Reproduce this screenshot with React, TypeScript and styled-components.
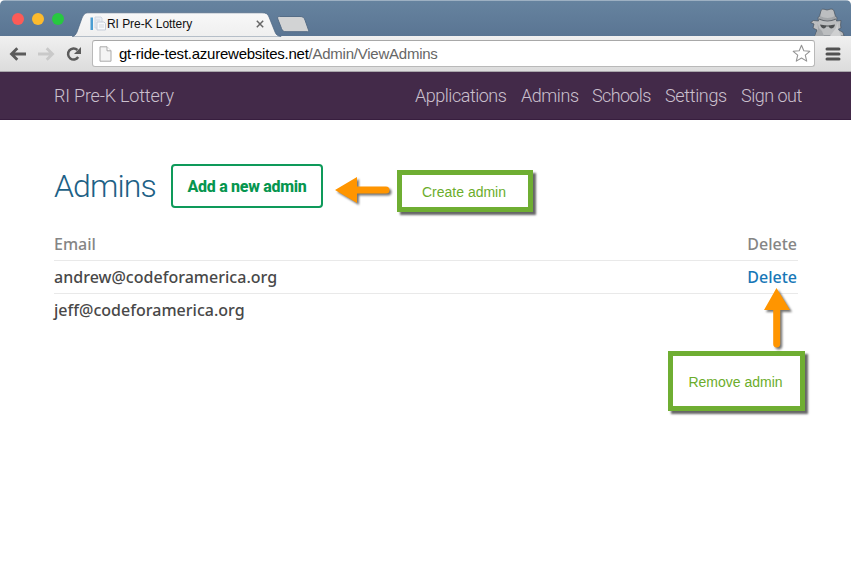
import React from "react";
import styled, { createGlobalStyle } from "styled-components";

const GlobalStyle = createGlobalStyle`
  * { box-sizing: border-box; }
  body { margin: 0; background: #fff; }
  a { text-decoration: none; color: inherit; }
`;

const Window = styled.div`
  width: 851px;
  height: 564px;
  position: relative;
  display: flex;
  flex-direction: column;
  background: #fff;
  border-radius: 5px 5px 4px 4px;
  overflow: hidden;
`;

const TabStrip = styled.div`
  height: 36px;
  flex: none;
  display: flex;
  align-items: flex-start;
  background: linear-gradient(#66839f, #5a7593);
  border-top: 1px solid #9db0c2;
`;

const Lights = styled.div`
  display: flex;
  gap: 8px;
  padding: 12px 0 0 12px;
  width: 72px;
  flex: none;
`;

const Light = styled.span<{ $fill: string }>`
  width: 12px;
  height: 12px;
  flex: none;
  border-radius: 50%;
  background: ${(p) => p.$fill};
`;

const Tab = styled.div`
  width: 211px;
  height: 36px;
  flex: none;
  position: relative;
`;

const TabShape = styled.svg`
  position: absolute;
  left: 0;
  top: 0;
`;

const TabContent = styled.div`
  position: relative;
  display: flex;
  align-items: center;
  height: 22px;
  margin-top: 12px;
  padding-left: 18px;
`;

const TabTitle = styled.span`
  width: 149px;
  margin-left: 1px;
  white-space: nowrap;
  font: 12px/16px "Liberation Sans", sans-serif;
  letter-spacing: -0.06px;
  color: #111;
`;

const NewTab = styled.svg`
  margin: 14px 0 0 -7px;
  position: relative;
`;

const Incognito = styled.svg`
  margin: 7px 6px 0 auto;
`;

const Toolbar = styled.div`
  height: 36px;
  flex: none;
  display: flex;
  align-items: center;
  padding: 0 10px 0 9px;
  background: linear-gradient(#f0f0f0, #dcdcdc);
  border-bottom: 1px solid #a9a6ab;
`;

const NavIcons = styled.div`
  display: flex;
  width: 83px;
  flex: none;
`;

const AddressBar = styled.div`
  width: 723px;
  height: 27px;
  flex: none;
  display: flex;
  align-items: center;
  padding: 0 3px 0 6px;
  border: 1px solid #b9b9b9;
  border-top-color: #a8a8a8;
  border-radius: 3px;
  background: #fff;
`;

const Url = styled.span`
  margin-left: 7px;
  flex: 1;
  white-space: nowrap;
  font: 15px/20px "Liberation Sans", sans-serif;
  letter-spacing: -0.24px;
  color: #666;
`;

const Host = styled.span`
  color: #000;
`;

const MenuIcon = styled.svg`
  margin-left: 10px;
`;

const SiteHeader = styled.header`
  height: 48px;
  flex: none;
  display: flex;
  align-items: center;
  justify-content: space-between;
  padding: 0 49px 0 54px;
  background: #432a49;
  border-bottom: 1px solid #371d3e;
  color: #cbc0ce;
  font: 300 18px/24px Roboto, sans-serif;
`;

const SiteNav = styled.nav`
  display: flex;
  gap: 14px;
`;

const NavLink = styled.a<{ $width: number; $spacing?: number }>`
  width: ${(p) => p.$width}px;
  padding-top: 1px;
  white-space: nowrap;
  letter-spacing: ${(p) => p.$spacing ?? 0}px;
`;

const Main = styled.main`
  padding: 44px 53px 0 54px;
`;

const TitleRow = styled.div`
  display: flex;
  align-items: center;
  height: 44px;
`;

const Title = styled.h1`
  margin: 0;
  width: 117px;
  font: 300 32px/44px Roboto, sans-serif;
  letter-spacing: -0.9px;
  color: #1d6186;
`;

const AddButton = styled.button`
  width: 152px;
  height: 44px;
  padding: 2px 0 0;
  border: 2px solid #0e9a5a;
  border-radius: 4px;
  background: #fff;
  color: #06964f;
  white-space: nowrap;
  font: 800 16px/24px Roboto, sans-serif;
  letter-spacing: -0.3px;
`;

const Table = styled.div`
  margin-top: 20px;
  font: 16px/32px "Noto Sans", sans-serif;
  color: #484848;
`;

const Row = styled.div<{ $head?: boolean; $last?: boolean }>`
  height: 33px;
  display: flex;
  justify-content: space-between;
  border-bottom: ${(p) => (p.$last ? "0" : "1px solid #e9e9e9")};
  color: ${(p) => (p.$head ? "#858585" : "inherit")};
`;

const Cell = styled.span<{ $spacing?: number; $action?: boolean }>`
  padding-right: ${(p) => (p.$action ? 1 : 0)}px;
  font-weight: 500;
  letter-spacing: ${(p) => p.$spacing ?? 0}px;
`;

const DeleteLink = styled.a`
  color: #1777b7;
`;

const Callout = styled.div<{ $x: number; $y: number; $w: number; $h: number }>`
  position: absolute;
  left: ${(p) => p.$x}px;
  top: ${(p) => p.$y}px;
  width: ${(p) => p.$w}px;
  height: ${(p) => p.$h}px;
  display: flex;
  align-items: center;
  justify-content: center;
  padding: 2px 2px 0 0;
  border: 5px solid #6fae32;
  background: #fff;
  box-shadow: 3px 3px 2px rgba(0, 0, 0, 0.6);
  color: #6bad2b;
  white-space: nowrap;
  font: 14px/18px "Liberation Sans", sans-serif;
`;

const Arrow = styled.svg<{ $x: number; $y: number }>`
  position: absolute;
  left: ${(p) => p.$x}px;
  top: ${(p) => p.$y}px;
  overflow: visible;
  filter: drop-shadow(2px 2px 1px rgba(0, 0, 0, 0.55));
`;

function PageIcon() {
  return (
    <svg width="13" height="16" viewBox="0 0 13 16">
      <path d="M1 .8h7l4 4v10.4H1z" fill="#f4f4f4" stroke="#aaa" />
      <path d="M8 .8v4h4" fill="#fff" stroke="#aaa" />
    </svg>
  );
}

function BrowserChrome() {
  return (
    <>
      <TabStrip>
        <Lights>
          <Light $fill="#fc5b57" />
          <Light $fill="#fdbb2d" />
          <Light $fill="#27c840" />
        </Lights>
        <Tab>
          <TabShape width="211" height="36">
            <defs>
              <linearGradient id="tab" x2="0" y2="1">
                <stop offset="0" stopColor="#f8f8f8" />
                <stop offset="1" stopColor="#efefef" />
              </linearGradient>
            </defs>
            <path
              d="M0 36C3 35 4 33 5 31L10 17C12 13 13 11.8 17 11.8H190C194 11.8 196 13 197 16L203 31C204 34 206 35 209 35.5V36Z"
              fill="url(#tab)"
              stroke="#4c6683"
              strokeWidth=".7"
            />
          </TabShape>
          <TabContent>
            <svg width="16" height="16" viewBox="0 0 16 16">
              <path d="M.5 1.5h2.5v12.5h-2.5z" fill="#4b9ed3" />
              <path d="M5 1h6l1 1v10H5z" fill="#e9edf3" stroke="#d1d8e2" />
              <path d="M7 6h7l1.5 1.5V14H7z" fill="#f8fafc" stroke="#c6cdd9" />
              <path d="M6 4h4M9 9h5M9 11h5" stroke="#d3d9e2" />
            </svg>
            <TabTitle>RI Pre-K Lottery</TabTitle>
            <svg width="8" height="8" viewBox="0 0 8 8">
              <path d="M.8.8l6.4 6.4M7.2.8L.8 7.2" stroke="#666" strokeWidth="1.5" />
            </svg>
          </TabContent>
        </Tab>
        <NewTab width="34" height="18" viewBox="0 0 34 18">
          <path
            d="M3.5 1.5H24C27 1.5 28 2.5 29 5L32.5 15C33 16.2 32.5 16.7 31.5 16.7H10C7.5 16.7 6.5 16 5.5 13.5L1.8 4C1.2 2.2 1.7 1.5 3.5 1.5Z"
            fill="#d2d3d4"
            stroke="#556d87"
          />
        </NewTab>
        <Incognito width="35" height="28" viewBox="0 0 35 28">
          <path
            d="M5 28L7 22L3 20L4 16L0.7 14.5L3.5 12.5L8.5 13L8 9.5L9.5 8.5L11 2.5Q12 .8 14 1.2L17 2L21 1Q23.5 .8 24 3L25.5 8.5L27 9.5L26.5 13L31 12.5L30.5 17L31 20L28 21.5L33 24.5L34 28Z"
            fill="#bcbec0"
            stroke="#4b535c"
            strokeWidth=".7"
          />
          <path d="M10 8Q17.500 12 25 8L26 10.500Q17.500 15 9 10.500Z" fill="#a3a6a9" />
          <path d="M9 11Q17.500 15 26 11" fill="none" stroke="#656a70" strokeWidth="1.200" />
          <path d="M10 16.500L16.300 17.500Q16 20.500 13.500 20.500Q11 20 10 16.500ZM18.700 17.500L25 16.500Q24.500 20 21.500 20.500Q19 20.500 18.700 17.500Z" fill="#4d5052" />
          <path d="M15.500 18h4" stroke="#4d5052" />
          <path d="M7.500 15L9 20L12 23L14 28H5L8 21Z" fill="#a4a7aa" />
          <path d="M27.500 15L26 20L20 28H31L28 21Z" fill="#cfd0d1" />
        </Incognito>
      </TabStrip>
      <Toolbar>
        <NavIcons>
          <svg width="77" height="18" viewBox="0 0 77 18">
            <path d="M17 9H3M8.3 3.2L2.5 9l5.8 5.8" fill="none" stroke="#5b5b5b" strokeWidth="2.8" />
            <path d="M29 9h14M37.7 3.2L43.5 9l-5.8 5.8" fill="none" stroke="#c9c9c9" strokeWidth="2.8" />
            <path d="M69.2 12A5.5 5.5 0 1 1 68.4 5" fill="none" stroke="#5b5b5b" strokeWidth="2.5" />
            <path d="M72 2v7h-7z" fill="#5b5b5b" />
          </svg>
        </NavIcons>
        <AddressBar>
          <PageIcon />
          <Url>
            <Host>gt-ride-test.azurewebsites.net</Host>/Admin/ViewAdmins
          </Url>
          <svg width="19" height="19" viewBox="0 0 19 19">
            <path
              d="M9.5 1.3l2.3 5.5 6 .5-4.5 3.9 1.4 5.9-5.2-3.1-5.2 3.1 1.4-5.9-4.5-3.9 6-.5z"
              fill="#fff"
              stroke="#949494"
              strokeWidth="1.1"
              strokeLinejoin="round"
            />
          </svg>
        </AddressBar>
        <MenuIcon width="16" height="14" viewBox="0 0 16 14">
          <path d="M2 2h12M2 7h12M2 12h12" stroke="#525252" strokeWidth="3" strokeLinecap="round" />
        </MenuIcon>
      </Toolbar>
    </>
  );
}

export default function App() {
  return (
    <>
      <GlobalStyle />
      <Window>
        <BrowserChrome />
        <SiteHeader>
          <NavLink href="#" $width={121} $spacing={-0.2}>RI Pre-K Lottery</NavLink>
          <SiteNav>
            <NavLink href="#" $width={92} $spacing={-0.48}>Applications</NavLink>
            <NavLink href="#" $width={57} $spacing={-0.45}>Admins</NavLink>
            <NavLink href="#" $width={59} $spacing={-0.65}>Schools</NavLink>
            <NavLink href="#" $width={62} $spacing={-0.35}>Settings</NavLink>
            <NavLink href="#" $width={61} $spacing={-0.5}>Sign out</NavLink>
          </SiteNav>
        </SiteHeader>
        <Main>
          <TitleRow>
            <Title>Admins</Title>
            <AddButton>Add a new admin</AddButton>
          </TitleRow>
          <Table>
            <Row $head>
              <Cell>Email</Cell>
              <Cell $action>Delete</Cell>
            </Row>
            <Row>
              <Cell $spacing={0.02}>andrew@codeforamerica.org</Cell>
              <Cell $action>
                <DeleteLink href="#">Delete</DeleteLink>
              </Cell>
            </Row>
            <Row $last>
              <Cell $spacing={0.02}>jeff@codeforamerica.org</Cell>
            </Row>
          </Table>
        </Main>
        <Callout $x={397} $y={170} $w={136} $h={42}>Create admin</Callout>
        <Arrow $x={335} $y={177} width="55" height="26">
          <path d="M0 13L22 0V9.5H51A3.5 3.5 0 0 1 51 16.5H22V26Z" fill="#ff9500" />
        </Arrow>
        <Callout $x={668} $y={351} $w={137} $h={60}>Remove admin</Callout>
        <Arrow $x={764} $y={288} width="26" height="60">
          <path d="M12.5 0L26 22H16.2V56A3.5 3.5 0 0 1 9.2 56V22H0Z" fill="#ff9500" />
        </Arrow>
      </Window>
    </>
  );
}
